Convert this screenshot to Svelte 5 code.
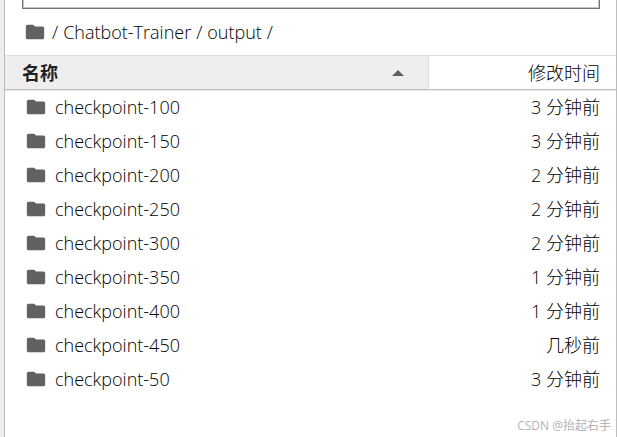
<script lang="ts">
	type Entry = { name: string; modified: string };

	const path = ['Chatbot-Trainer', 'output'];

	const entries: Entry[] = [
		{ name: 'checkpoint-100', modified: '3 分钟前' },
		{ name: 'checkpoint-150', modified: '3 分钟前' },
		{ name: 'checkpoint-200', modified: '2 分钟前' },
		{ name: 'checkpoint-250', modified: '2 分钟前' },
		{ name: 'checkpoint-300', modified: '2 分钟前' },
		{ name: 'checkpoint-350', modified: '1 分钟前' },
		{ name: 'checkpoint-400', modified: '1 分钟前' },
		{ name: 'checkpoint-450', modified: '几秒前' },
		{ name: 'checkpoint-50', modified: '3 分钟前' }
	];

	let filter = $state('');
	let ascending = $state(true);

	let shown = $derived.by(() => {
		const list = entries.filter((e) => e.name.includes(filter));
		return ascending ? list : list.reverse();
	});
</script>

{#snippet folder()}
	<svg class="folder" viewBox="0 0 24 24" aria-hidden="true">
		<path d="M10 4H4c-1.1 0-1.99.9-1.99 2L2 18c0 1.1.9 2 2 2h16c1.1 0 2-.9 2-2V8c0-1.1-.9-2-2-2h-8l-2-2z" />
	</svg>
{/snippet}

<div class="browser">
	<input class="filter" type="text" aria-label="Filter files by name" bind:value={filter} />

	<nav class="crumbs">
		<a class="root" href="#root" aria-label="root">{@render folder()}</a>
		<span>/</span>
		{#each path as part}
			<a href="#{part}">{part}</a>
			<span>/</span>
		{/each}
	</nav>

	<table>
		<thead>
			<tr>
				<th class="name" aria-sort={ascending ? 'ascending' : 'descending'}>
					<button onclick={() => (ascending = !ascending)}>
						名称
						<svg class="caret" class:flipped={!ascending} viewBox="0 0 12 6" aria-hidden="true">
							<path d="M0 6 6 0l6 6z" />
						</svg>
					</button>
				</th>
				<th class="modified"><button>修改时间</button></th>
			</tr>
		</thead>
		<tbody>
			{#each shown as entry (entry.name)}
				<tr>
					<td><a class="item" href="#{entry.name}">{@render folder()}{entry.name}</a></td>
					<td class="modified">{entry.modified}</td>
				</tr>
			{/each}
		</tbody>
	</table>

	<span class="watermark">CSDN @抬起右手</span>
</div>

<style>
	:global(body) {
		background: #eee;
	}

	.browser {
		position: relative;
		box-sizing: border-box;
		min-height: 100vh;
		margin-left: 4px;
		border: solid #bdbdbd;
		border-width: 0 1px;
		background: #fff;
		color: #000;
		font: 300 18px/24px 'Open Sans', 'Noto Sans CJK SC', sans-serif;
	}

	.filter {
		display: block;
		box-sizing: border-box;
		width: calc(100% - 33px);
		height: 9px;
		margin: 0 16px 0 17px;
		padding: 0;
		border: 1px solid #767676;
		border-top: none;
		box-shadow: inset 1px -1px #c4c4c4, inset -1px 0 #c4c4c4;
		font: inherit;
		outline: none;
	}

	.crumbs {
		display: flex;
		align-items: center;
		gap: 5px;
		padding: 11px 17px;
	}

	.root {
		display: flex;
		padding: 0 1px 0 2px;
	}

	a {
		color: inherit;
		text-decoration: none;
	}

	a:hover {
		text-decoration: underline;
	}

	.folder {
		width: 22px;
		height: 22px;
		fill: #616161;
	}

	table {
		width: 100%;
		border-collapse: separate;
		border-spacing: 0;
		table-layout: fixed;
	}

	th {
		padding: 0;
		border-top: 1px solid #e0e0e0;
		border-bottom: 1px solid #bdbdbd;
		box-shadow: 0 1px 1px rgba(0, 0, 0, 0.08);
	}

	th.name {
		border-right: 1px solid #e0e0e0;
		background: #eee;
	}

	th button {
		display: flex;
		align-items: center;
		justify-content: space-between;
		width: 100%;
		height: 33px;
		padding: 0 24px 0 17px;
		border: none;
		background: none;
		color: inherit;
		font: inherit;
		cursor: pointer;
	}

	th.name button {
		color: #212121;
		font-weight: bold;
	}

	.modified {
		width: 187px;
		text-align: right;
	}

	th.modified {
		font-weight: 300;
	}

	th.modified button {
		justify-content: flex-end;
		padding: 0 16px;
	}

	.caret {
		width: 12px;
		height: 6px;
		fill: #616161;
	}

	.flipped {
		transform: rotate(180deg);
	}

	td {
		height: 34px;
		padding: 0 0 0 20px;
		box-sizing: border-box;
	}

	td.modified {
		padding: 0 16px 0 0;
	}

	.item {
		display: flex;
		align-items: center;
		gap: 8px;
	}

	.watermark {
		position: absolute;
		right: 5px;
		bottom: 2px;
		color: #b4b4b4;
		font-size: 12px;
		font-weight: 400;
		line-height: 18px;
	}
</style>
